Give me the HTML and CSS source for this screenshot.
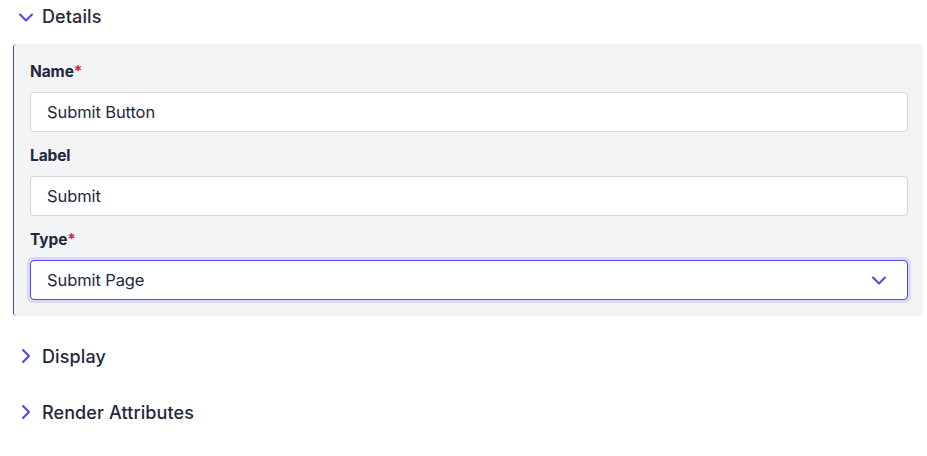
FILE: index.html
```html
<!DOCTYPE html>
<html>
<head>
<meta charset="utf-8">
<link rel="stylesheet" href="styles.css">
</head>
<body>
<div class="page">
  <div class="section">
    <div class="sec-head">
      <svg class="chev" width="16" height="16" viewBox="0 0 16 16"><path d="M2 5.5 L8 11.5 L14 5.5" fill="none" stroke="#4f46e5" stroke-width="2" stroke-linecap="round" stroke-linejoin="round"/></svg>
      <span class="sec-title">Details</span>
    </div>
    <div class="panel">
      <div class="field">
        <label class="lbl">Name<span class="req">*</span></label>
        <div class="input">Submit Button</div>
      </div>
      <div class="field">
        <label class="lbl">Label</label>
        <div class="input">Submit</div>
      </div>
      <div class="field">
        <label class="lbl">Type<span class="req">*</span></label>
        <div class="input select">
          <span>Submit Page</span>
          <svg width="16" height="16" viewBox="0 0 16 16"><path d="M2 5.5 L8 11.5 L14 5.5" fill="none" stroke="#4f46e5" stroke-width="2" stroke-linecap="round" stroke-linejoin="round"/></svg>
        </div>
      </div>
    </div>
  </div>
  <div class="section collapsed">
    <div class="sec-head">
      <svg class="chev" width="16" height="16" viewBox="0 0 16 16"><path d="M5 2 L11 8 L5 14" fill="none" stroke="#4f46e5" stroke-width="2" stroke-linecap="round" stroke-linejoin="round"/></svg>
      <span class="sec-title">Display</span>
    </div>
  </div>
  <div class="section collapsed">
    <div class="sec-head">
      <svg class="chev" width="16" height="16" viewBox="0 0 16 16"><path d="M5 2 L11 8 L5 14" fill="none" stroke="#4f46e5" stroke-width="2" stroke-linecap="round" stroke-linejoin="round"/></svg>
      <span class="sec-title">Render Attributes</span>
    </div>
  </div>
</div>
</body>
</html>
```
FILE: styles.css
```css
* { box-sizing: border-box; }
html, body { margin: 0; padding: 0; background: #fff; }
body {
  font-family: Inter, "Noto Sans", sans-serif;
  color: #1e293b;
}
.page {
  width: 927px;
  padding: 0 4px 0 13px;
}
.sec-head {
  display: flex;
  align-items: center;
  gap: 8px;
  height: 33px;
  margin-left: 5px;
}
.sec-title {
  font-size: 18px;
  font-weight: 500;
  letter-spacing: 0.1px;
}
.collapsed { margin-top: 24px; }
.collapsed .sec-head { height: 32px; }
.panel {
  margin-top: 11px;
  background: #f3f4f6;
  border-left: 1px solid #4f46e5;
  border-radius: 4px;
  padding: 18px 15px 16px 16px;
  display: flex;
  flex-direction: column;
  gap: 14px;
}
.field {
  display: flex;
  flex-direction: column;
  gap: 10px;
}
.lbl {
  font-size: 15.5px;
  font-weight: 700;
  line-height: 20px;
  color: #1e293b;
  letter-spacing: -0.1px;
}
.req { color: #e11d48; }
.input {
  height: 40px;
  background: #fff;
  border: 1px solid #d1d5db;
  border-radius: 4px;
  padding: 0 16px;
  display: flex;
  align-items: center;
  font-size: 16.5px;
  color: #1e293b;
  letter-spacing: -0.1px;
}
.select {
  border: 1.5px solid #4f46e5;
  box-shadow: 0 0 0 3px #d8d9f3;
  justify-content: space-between;
  padding-right: 20px;
}
```
